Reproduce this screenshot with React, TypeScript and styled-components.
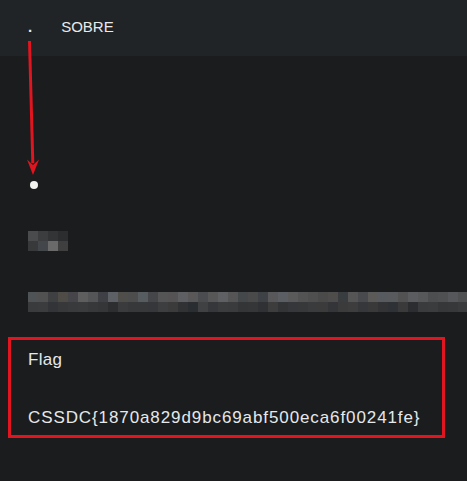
import React from "react";
import styled, { createGlobalStyle } from "styled-components";

const Global = createGlobalStyle`
  html, body { margin: 0; padding: 0; background: #1b1c1e; }
  body { font-family: "Liberation Sans", Arial, sans-serif; color: #e4e6e8; }
`;

const Page = styled.div`
  position: relative;
  width: 467px;
  height: 481px;
  overflow: hidden;
  background: #1b1c1e;
`;

const Header = styled.header`
  height: 56px;
  background: #212426;
  display: flex;
  align-items: center;
  padding: 0 0 4px 28px;
  box-sizing: border-box;
  gap: 29px;
  font-size: 15px;
  color: #e8eaec;
`;

const NavItem = styled.span<{ $bold?: boolean }>`
  font-weight: ${(p) => (p.$bold ? 700 : 400)};
`;

const Main = styled.main`
  display: flex;
  flex-direction: column;
  padding: 0 0 0 28px;
`;

const Dot = styled.div`
  width: 8px;
  height: 8px;
  border-radius: 50%;
  background: #f2f2ee;
  margin: 125px 0 0 2px;
`;

const MosaicGrid = styled.div<{ $cols: number }>`
  display: grid;
  grid-template-columns: repeat(${(p) => p.$cols}, 10px);
  grid-auto-rows: 10px;
  width: max-content;
  margin-top: ${(p) => (p.$cols > 4 ? "41px" : "42px")};
`;

const Cell = styled.div<{ $c: string }>`
  background: ${(p) => p.$c};
`;

const FlagBox = styled.section`
  margin: 25px 0 0 -20px;
  width: 437px;
  height: 101px;
  box-sizing: border-box;
  border: 3px solid #e0151f;
  padding: 10px 0 0 17px;
  display: flex;
  flex-direction: column;
  gap: 38px;
  font-size: 17px;
  color: #e6e8ea;
`;

const FlagLabel = styled.div`
  line-height: 20px;
  letter-spacing: 0.3px;
`;

const FlagValue = styled.div`
  line-height: 20px;
  letter-spacing: 0.9px;
`;

const Arrow = styled.svg`
  position: absolute;
  left: 0;
  top: 0;
  pointer-events: none;
`;

const mosaic1 = [
  "#4a4b4d", "#3c3d3f", "#333436", "#2c2d2f",
  "#38393b", "#43474b", "#6a6a6b", "#3f3f40",
];

const row1 = [
  "#4f5356", "#515151", "#3f4042", "#4f4b47", "#46464a", "#5e5e5e", "#545556", "#3f4045",
  "#5d6064", "#504e4b", "#4d4d4d", "#575c60", "#45464a", "#555555", "#555353", "#5e5f63",
  "#5a5758", "#4a4c50", "#575757", "#5f6064", "#555555", "#45484b", "#4a4a4a", "#3e4145",
  "#58585a", "#5b5e62", "#5a5a5a", "#545353", "#4f4f50", "#4b4a4a", "#4e4d4c", "#3a3d40",
  "#555555", "#484a4d", "#5b5a58", "#575a5e", "#585a5d", "#535252", "#5b5c5f", "#575859",
  "#4d4e50", "#4f5052", "#56575a", "#4f5052",
];
const row2 = [
  "#3a3b3d", "#3b3c3e", "#333437", "#37383a", "#393a3c", "#3a3b3d", "#37383a", "#353638",
  "#2d2e30", "#3a3b3d", "#373839", "#37383a", "#36373a", "#3d3e3f", "#3b3b3c", "#303234",
  "#2a2d31", "#404142", "#36373a", "#3b3c3e", "#3a3b3d", "#343536", "#353638", "#2f3134",
  "#3e3d3d", "#333436", "#36373a", "#37383a", "#3a3b3c", "#3b3b3c", "#333538", "#3b3b3c",
  "#3d3d3e", "#36373a", "#39393a", "#333335", "#2e3135", "#3a3a3b", "#2c2d30", "#3a3b3d",
  "#3b3c3e", "#363739", "#37383a", "#3a3b3d",
];

function Mosaic({ cols, colors }: { cols: number; colors: string[] }) {
  return (
    <MosaicGrid $cols={cols}>
      {colors.map((c, i) => (
        <Cell key={i} $c={c} />
      ))}
    </MosaicGrid>
  );
}

export default function App() {
  return (
    <>
      <Global />
      <Page>
        <Header>
          <NavItem $bold>.</NavItem>
          <NavItem>SOBRE</NavItem>
        </Header>
        <Main>
          <Dot />
          <Mosaic cols={4} colors={mosaic1} />
          <Mosaic cols={44} colors={[...row1, ...row2]} />
          <FlagBox>
            <FlagLabel>Flag</FlagLabel>
            <FlagValue>CSSDC{"{"}1870a829d9bc69abf500eca6f00241fe{"}"}</FlagValue>
          </FlagBox>
        </Main>
        <Arrow width="467" height="481" viewBox="0 0 467 481">
          <line x1="29.5" y1="41" x2="32.8" y2="163" stroke="#e0151f" strokeWidth="3" />
          <path d="M33 175 L27 159.5 L33 165 L39 159.5 Z" fill="#e0151f" />
        </Arrow>
      </Page>
    </>
  );
}
